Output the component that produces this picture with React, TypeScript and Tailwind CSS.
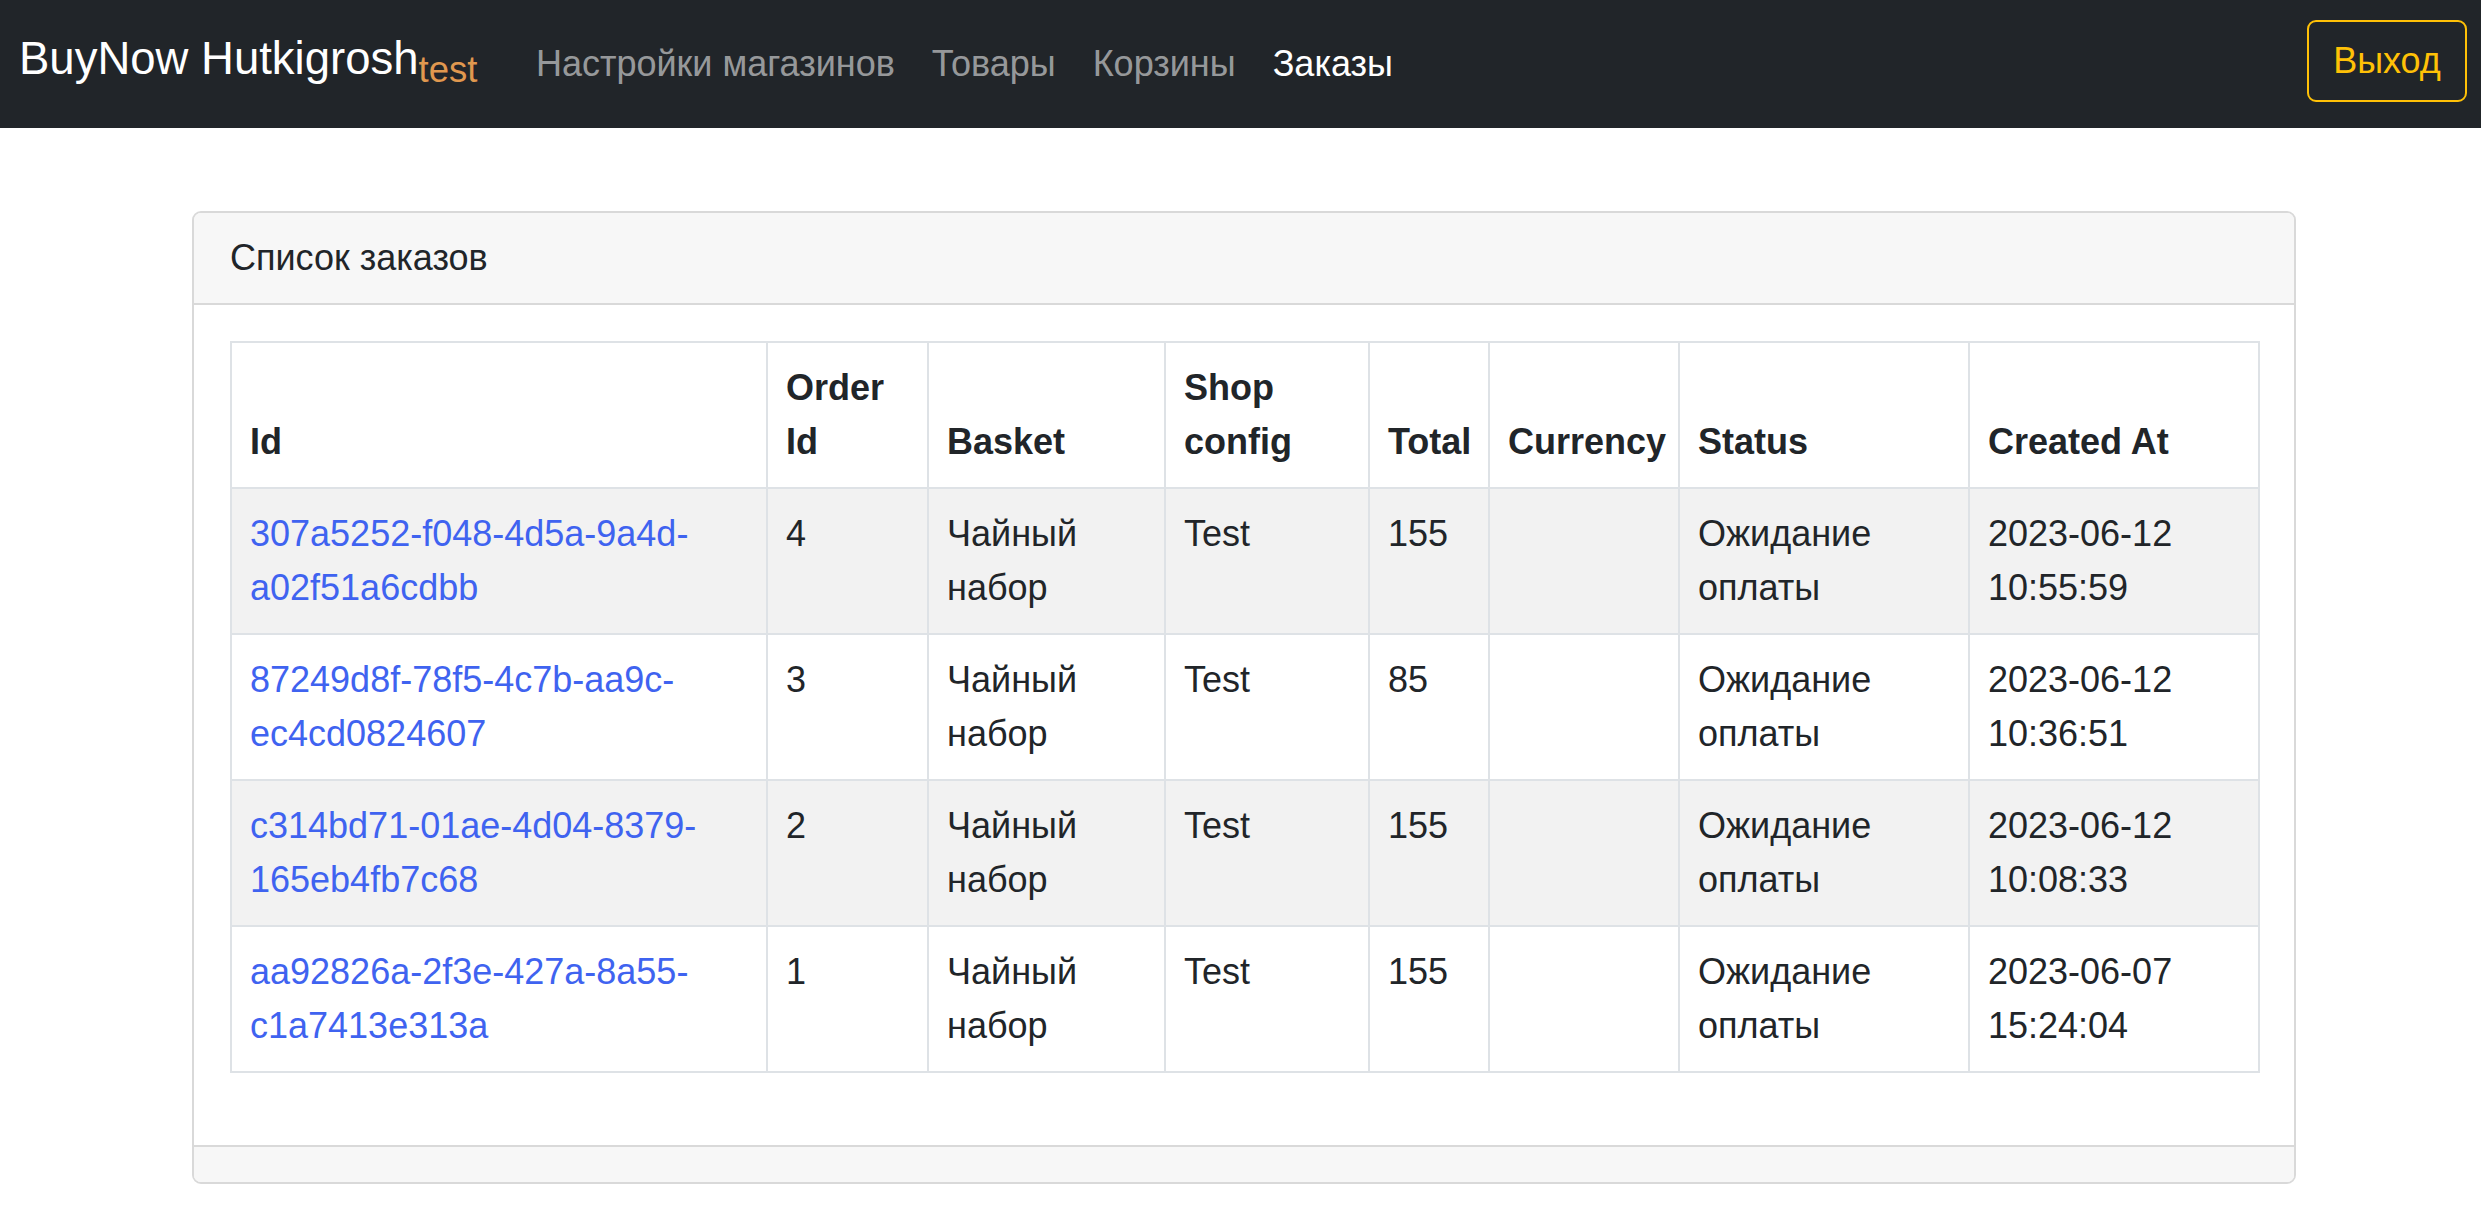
import React from 'react';

type Order = {
  idHead: string;
  idTail: string;
  orderId: number;
  total: number;
  date: string;
  time: string;
};

const ORDERS: Order[] = [
  { idHead: '307a5252-f048-4d5a-9a4d-', idTail: 'a02f51a6cdbb', orderId: 4, total: 155, date: '2023-06-12', time: '10:55:59' },
  { idHead: '87249d8f-78f5-4c7b-aa9c-', idTail: 'ec4cd0824607', orderId: 3, total: 85, date: '2023-06-12', time: '10:36:51' },
  { idHead: 'c314bd71-01ae-4d04-8379-', idTail: '165eb4fb7c68', orderId: 2, total: 155, date: '2023-06-12', time: '10:08:33' },
  { idHead: 'aa92826a-2f3e-427a-8a55-', idTail: 'c1a7413e313a', orderId: 1, total: 155, date: '2023-06-07', time: '15:24:04' },
];

const NAV_LINKS = [
  { label: 'Настройки магазинов', active: false },
  { label: 'Товары', active: false },
  { label: 'Корзины', active: false },
  { label: 'Заказы', active: true },
];

const th = 'px-[18px] py-[18px] border-2 border-[#dee2e6] text-left align-bottom font-bold';
const td = 'px-[18px] py-[18px] border-2 border-[#dee2e6] align-top';

const App: React.FC = () => {
  return (
    <div className="min-h-screen bg-white font-['Liberation_Sans',Arial,sans-serif] text-[36px] leading-[54px] text-[#212529]">
      <nav className="h-[128px] bg-[#212529] flex items-center pl-[19px] pr-[14px]">
        <a className="text-[45.5px] leading-[68px] text-white mr-[40px] whitespace-nowrap">
          BuyNow Hutkigrosh
          <span className="text-[36.5px] text-[#e0984f] align-[-8px]">test</span>
        </a>
        <ul className="flex items-center">
          {NAV_LINKS.map((link) => (
            <li key={link.label}>
              <a
                className={`px-[18.5px] whitespace-nowrap ${
                  link.active ? 'text-white' : 'text-[rgba(255,255,255,0.55)]'
                }`}
              >
                {link.label}
              </a>
            </li>
          ))}
        </ul>
        <button className="ml-auto w-[160px] h-[82px] rounded-[9px] border-2 border-[#ffc107] text-[#ffc107] text-[36px] leading-[54px] mb-[6px]">
          Выход
        </button>
      </nav>

      <div className="ml-[192px] mt-[83px] w-[2104px] rounded-[9px] border-2 border-[#d9d9d9] overflow-hidden">
        <div className="px-[36px] py-[18px] bg-[#f7f7f7] border-b-2 border-[#d9d9d9]">Список заказов</div>

        <div className="p-[36px]">
          <table className="w-full table-fixed border-collapse border-2 border-[#dee2e6] mb-[36px]">
            <colgroup>
              <col className="w-[536px]" />
              <col className="w-[161px]" />
              <col className="w-[237px]" />
              <col className="w-[204px]" />
              <col className="w-[120px]" />
              <col className="w-[190px]" />
              <col className="w-[290px]" />
              <col className="w-[290px]" />
            </colgroup>
            <thead>
              <tr>
                <th className={th}>Id</th>
                <th className={th}>Order Id</th>
                <th className={th}>Basket</th>
                <th className={th}>Shop config</th>
                <th className={th}>Total</th>
                <th className={th}>Currency</th>
                <th className={th}>Status</th>
                <th className={th}>Created At</th>
              </tr>
            </thead>
            <tbody>
              {ORDERS.map((order, i) => (
                <tr key={order.orderId} className={i % 2 === 0 ? 'bg-[#f2f2f2]' : 'bg-white'}>
                  <td className={td}>
                    <a className="text-[#3f63f0]">
                      {order.idHead}
                      <br />
                      {order.idTail}
                    </a>
                  </td>
                  <td className={td}>{order.orderId}</td>
                  <td className={td}>Чайный набор</td>
                  <td className={td}>Test</td>
                  <td className={td}>{order.total}</td>
                  <td className={td}></td>
                  <td className={td}>Ожидание оплаты</td>
                  <td className={td}>
                    {order.date}
                    <br />
                    {order.time}
                  </td>
                </tr>
              ))}
            </tbody>
          </table>
        </div>

        <div className="h-[37px] bg-[#f7f7f7] border-t-2 border-[#d9d9d9]"></div>
      </div>
    </div>
  );
};

export default App;
